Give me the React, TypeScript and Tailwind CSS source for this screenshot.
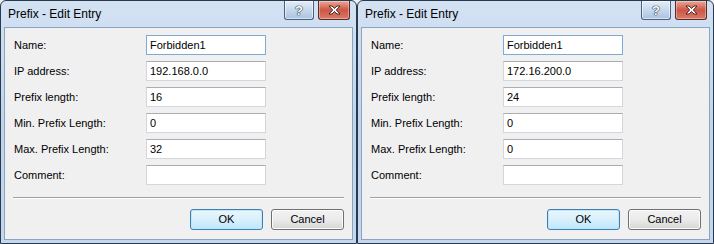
import React from "react";

interface EntryProps {
    ip: string;
    prefix: string;
    min: string;
    max: string;
}

const CaptionButtons: React.FC = () => (
    <div className="flex items-start gap-[4px] pr-[3px]">
        <div className="w-[30px] h-[19px] rounded-b-[3px] border border-t-0 border-[#4b5f7e] bg-gradient-to-b from-[#e4edf8] via-[#c7d8ec] to-[#a9c2df] flex items-center justify-center shadow-[inset_0_0_0_1px_rgba(255,255,255,0.55)]">
            <span className="text-[13px] leading-none font-bold text-white [text-shadow:0_0_1px_#1d2c44,0_0_1px_#1d2c44,0_0_1px_#1d2c44]">?</span>
        </div>
        <div className="w-[32px] h-[19px] rounded-b-[3px] border border-t-0 border-[#5b2a24] bg-gradient-to-b from-[#e9a898] via-[#cd5545] to-[#d87a68] flex items-center justify-center shadow-[inset_0_0_0_1px_rgba(255,255,255,0.35)]">
            <svg width="13" height="10" viewBox="0 0 13 10">
                <path
                    d="M1 1 H4 L6.5 3.4 L9 1 H12 L8.3 5 L12 9 H9 L6.5 6.6 L4 9 H1 L4.7 5 Z"
                    fill="#ffffff"
                    stroke="#3b1a16"
                    strokeWidth="0.9"
                    strokeLinejoin="round"
                />
            </svg>
        </div>
    </div>
);

const Row: React.FC<{ label: string; value: string; focused?: boolean }> = ({ label, value, focused }) => (
    <div className="flex items-center h-[20px]">
        <div className="w-[141px] pl-[9px]">{label}</div>
        <div
            className={
                focused
                    ? "w-[120px] h-[20px] border border-[#7eaad6] bg-white px-[3px] flex items-center"
                    : "w-[120px] h-[20px] border border-[#d3d6dc] border-t-[#abadb3] bg-white px-[3px] flex items-center"
            }
        >
            {value}
        </div>
    </div>
);

const EditWindow: React.FC<EntryProps> = ({ ip, prefix, min, max }) => {
    return (
        <div className="w-[357px] h-[244px] flex flex-col rounded-t-[6px] border border-[#2a3a4e] bg-gradient-to-b from-[#d3e2f3] via-[#c0d5ec] to-[#c3d7ee] px-[3px] pb-[3px]">
            {/* title bar */}
            <div className="h-[26px] flex items-start justify-between">
                <div className="pl-[4px] pt-[6px] text-[12px] leading-[14px] text-black">Prefix - Edit Entry</div>
                <CaptionButtons />
            </div>
            {/* client area */}
            <div className="flex-1 flex flex-col border border-[#8ba4c1] bg-[#f0f0f0] text-[11px] text-black">
                <div className="flex flex-col gap-[6px] pt-[7px]">
                    <Row label="Name:" value="Forbidden1" focused />
                    <Row label="IP address:" value={ip} />
                    <Row label="Prefix length:" value={prefix} />
                    <Row label="Min. Prefix Length:" value={min} />
                    <Row label="Max. Prefix Length:" value={max} />
                    <Row label="Comment:" value="" />
                </div>
                <div className="mt-[12px] ml-[8px] mr-[8px] border-t border-[#a0a0a0] border-b border-b-white" />
                <div className="flex justify-end gap-[8px] pr-[8px] mt-[10px]">
                    <button className="w-[73px] h-[21px] rounded-[3px] border border-[#3c7fb1] bg-gradient-to-b from-[#eaf6fd] via-[#d9f0fc] to-[#bee6fd] shadow-[inset_0_0_0_1px_#c4e5f6]">
                        OK
                    </button>
                    <button className="w-[73px] h-[21px] rounded-[3px] border border-[#707070] bg-gradient-to-b from-[#f2f2f2] via-[#ebebeb] to-[#d6d6d6] shadow-[inset_0_0_0_1px_#fcfcfc]">
                        Cancel
                    </button>
                </div>
            </div>
        </div>
    );
};

export default function App() {
    return (
        <div className="w-[714px] h-[244px] flex bg-[#f0f0f0] overflow-hidden font-['Liberation_Sans',Arial,sans-serif]">
            <EditWindow ip="192.168.0.0" prefix="16" min="0" max="32" />
            <EditWindow ip="172.16.200.0" prefix="24" min="0" max="0" />
        </div>
    );
}
